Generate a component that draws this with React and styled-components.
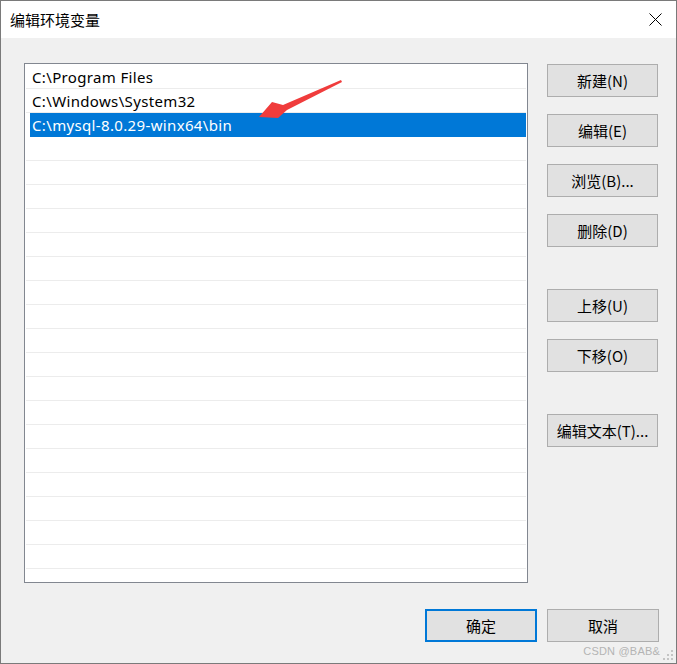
import React from "react";
import styled, { createGlobalStyle } from "styled-components";

const Global = createGlobalStyle`
  html, body { margin: 0; padding: 0; background: #f0f0f0; }
  * { box-sizing: border-box; }
  body { font-family: "Noto Sans", "Noto Sans CJK SC", sans-serif; }
`;

const Window = styled.div`
  position: relative;
  width: 677px;
  height: 664px;
  border: 1px solid #7a7a7a;
  background: #f0f0f0;
  display: flex;
  flex-direction: column;
  font-family: "Noto Sans", "Noto Sans CJK SC", sans-serif;
  font-size: 15px;
  color: #000;
`;

const TitleBar = styled.div`
  height: 37px;
  flex: none;
  background: #fff;
  display: flex;
  align-items: center;
  justify-content: space-between;
  padding-left: 9px;
  padding-right: 14px;
`;

const Title = styled.span`
  font-family: "Noto Sans CJK SC", sans-serif;
  font-size: 15px;
  line-height: 1;
`;

const CloseBtn = styled.div`
  width: 13px;
  height: 13px;
  display: flex;
`;

const Body = styled.div`
  flex: 1;
  display: flex;
  flex-direction: column;
  padding: 25px 17px 0 23px;
`;

const Main = styled.div`
  display: flex;
  gap: 19px;
`;

const ListBox = styled.div`
  width: 504px;
  height: 520px;
  border: 1px solid #828790;
  background: #fff;
  padding: 1px 1px 0 1px;
  overflow: hidden;
`;

const Row = styled.div`
  height: 24px;
  display: flex;
  align-items: center;
  padding-left: 6px;
  padding-bottom: 1px;
  white-space: nowrap;
  color: ${(p) => (p.$selected ? "#fff" : "#000")};
  background: ${(p) =>
    p.$selected
      ? "linear-gradient(to right, transparent 4px, #0078d7 4px)"
      : "linear-gradient(#ececec, #ececec) left bottom / 100% 1px no-repeat"};
  font-family: "Noto Sans", "Noto Sans CJK SC", sans-serif;
  font-size: 15px;
  letter-spacing: 0.35px;
`;

const Side = styled.div`
  width: 111px;
  display: flex;
  flex-direction: column;
  padding-top: 1px;
`;

const Button = styled.div`
  height: 33px;
  width: ${(p) => p.$w || "111px"};
  margin-top: ${(p) => p.$mt || 0}px;
  background: #e1e1e1;
  border: ${(p) => (p.$primary ? "2px solid #0078d7" : "1px solid #adadad")};
  display: flex;
  align-items: center;
  justify-content: center;
  font-family: "Noto Sans CJK SC", sans-serif;
  font-size: 15px;
  line-height: 1;
  color: #000;
`;

const Footer = styled.div`
  display: flex;
  justify-content: flex-end;
  gap: 10px;
  margin-top: 26px;
`;

const Arrow = styled.svg`
  position: absolute;
  left: 0;
  top: 0;
  pointer-events: none;
`;

const Watermark = styled.div`
  position: absolute;
  right: 16px;
  bottom: 6px;
  font-family: "Liberation Sans", Arial, sans-serif;
  font-size: 11px;
  color: #b4b4b4;
  letter-spacing: 0.2px;
`;

const Grip = styled.svg`
  position: absolute;
  right: 2px;
  bottom: 2px;
`;

const items = [
  "C:\\Program Files",
  "C:\\Windows\\System32",
  "C:\\mysql-8.0.29-winx64\\bin",
];

const sideButtons = [
  { label: "新建(N)", mt: 0 },
  { label: "编辑(E)", mt: 17 },
  { label: "浏览(B)...", mt: 17 },
  { label: "删除(D)", mt: 17 },
  { label: "上移(U)", mt: 42 },
  { label: "下移(O)", mt: 17 },
  { label: "编辑文本(T)...", mt: 42 },
];

export default function App() {
  const rows = [];
  for (let i = 0; i < 22; i++) {
    rows.push(
      <Row key={i} $selected={i === 2}>
        {items[i] || ""}
      </Row>
    );
  }
  return (
    <>
      <Global />
      <Window>
        <TitleBar>
          <Title>编辑环境变量</Title>
          <CloseBtn>
            <svg width="13" height="13" viewBox="0 0 13 13">
              <path d="M0.5 0.5 L12.5 12.5 M12.5 0.5 L0.5 12.5" stroke="#000" strokeWidth="1" fill="none" />
            </svg>
          </CloseBtn>
        </TitleBar>
        <Body>
          <Main>
            <ListBox>{rows}</ListBox>
            <Side>
              {sideButtons.map((b) => (
                <Button key={b.label} $mt={b.mt}>
                  {b.label}
                </Button>
              ))}
            </Side>
          </Main>
          <Footer>
            <Button $primary $w="112px">确定</Button>
            <Button $w="112px">取消</Button>
          </Footer>
        </Body>
        <Arrow width="677" height="664" viewBox="0 0 677 664">
          <polygon
            points="340,79 282,104 271,101 258,116 277,117 286,109 341,81"
            fill="#f03c3c"
          />
        </Arrow>
        <Watermark>CSDN @BAB&amp;</Watermark>
        <Grip width="12" height="12" viewBox="0 0 12 12">
          <g fill="#c4c4c4">
            <rect x="9" y="1" width="2" height="2" />
            <rect x="5" y="5" width="2" height="2" />
            <rect x="9" y="5" width="2" height="2" />
            <rect x="1" y="9" width="2" height="2" />
            <rect x="5" y="9" width="2" height="2" />
            <rect x="9" y="9" width="2" height="2" />
          </g>
        </Grip>
      </Window>
    </>
  );
}
